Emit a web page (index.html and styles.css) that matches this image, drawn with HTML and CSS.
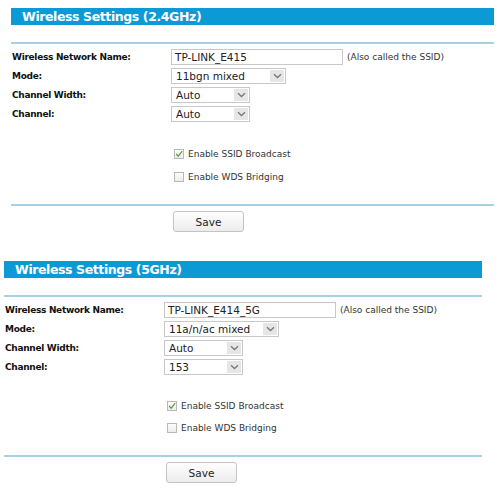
FILE: index.html
```html
<!DOCTYPE html>
<html>
<head>
<meta charset="utf-8">
<link rel="stylesheet" href="styles.css">
</head>
<body>
<section class="panel panel-a">
  <h2 class="title">Wireless Settings (2.4GHz)</h2>
  <div class="rule rule-top"></div>
  <div class="form">
    <div class="label">Wireless Network Name:</div>
    <div class="field"><span class="input w-ssid">TP-LINK_E415</span><span class="note">(Also called the SSID)</span></div>
    <div class="label">Mode:</div>
    <div class="field"><span class="select w-mode"><span class="val">11bgn mixed</span><span class="arrow"><svg width="9" height="6" viewBox="0 0 9 6"><path d="M1 1.2 L4.5 4.5 L8 1.2" fill="none" stroke="#777" stroke-width="1.3"/></svg></span></span></div>
    <div class="label">Channel Width:</div>
    <div class="field"><span class="select w-small"><span class="val">Auto</span><span class="arrow"><svg width="9" height="6" viewBox="0 0 9 6"><path d="M1 1.2 L4.5 4.5 L8 1.2" fill="none" stroke="#777" stroke-width="1.3"/></svg></span></span></div>
    <div class="label">Channel:</div>
    <div class="field"><span class="select w-small"><span class="val">Auto</span><span class="arrow"><svg width="9" height="6" viewBox="0 0 9 6"><path d="M1 1.2 L4.5 4.5 L8 1.2" fill="none" stroke="#777" stroke-width="1.3"/></svg></span></span></div>
  </div>
  <div class="checks">
    <div class="check"><span class="box"><svg width="10" height="10" viewBox="0 0 10 10"><path d="M1.5 5 L4 7.8 L9 1.5" fill="none" stroke="#5f9f3c" stroke-width="1.5"/></svg></span>Enable SSID Broadcast</div>
    <div class="check"><span class="box"></span>Enable WDS Bridging</div>
  </div>
  <div class="rule rule-bottom"></div>
  <div class="actions"><span class="btn">Save</span></div>
</section>

<section class="panel panel-b">
  <h2 class="title">Wireless Settings (5GHz)</h2>
  <div class="rule rule-top"></div>
  <div class="form">
    <div class="label">Wireless Network Name:</div>
    <div class="field"><span class="input w-ssid">TP-LINK_E414_5G</span><span class="note">(Also called the SSID)</span></div>
    <div class="label">Mode:</div>
    <div class="field"><span class="select w-mode"><span class="val">11a/n/ac mixed</span><span class="arrow"><svg width="9" height="6" viewBox="0 0 9 6"><path d="M1 1.2 L4.5 4.5 L8 1.2" fill="none" stroke="#777" stroke-width="1.3"/></svg></span></span></div>
    <div class="label">Channel Width:</div>
    <div class="field"><span class="select w-small"><span class="val">Auto</span><span class="arrow"><svg width="9" height="6" viewBox="0 0 9 6"><path d="M1 1.2 L4.5 4.5 L8 1.2" fill="none" stroke="#777" stroke-width="1.3"/></svg></span></span></div>
    <div class="label">Channel:</div>
    <div class="field"><span class="select w-small"><span class="val">153</span><span class="arrow"><svg width="9" height="6" viewBox="0 0 9 6"><path d="M1 1.2 L4.5 4.5 L8 1.2" fill="none" stroke="#777" stroke-width="1.3"/></svg></span></span></div>
  </div>
  <div class="checks">
    <div class="check"><span class="box"><svg width="10" height="10" viewBox="0 0 10 10"><path d="M1.5 5 L4 7.8 L9 1.5" fill="none" stroke="#5f9f3c" stroke-width="1.5"/></svg></span>Enable SSID Broadcast</div>
    <div class="check"><span class="box"></span>Enable WDS Bridging</div>
  </div>
  <div class="rule rule-bottom"></div>
  <div class="actions"><span class="btn">Save</span></div>
</section>
</body>
</html>
```

FILE: styles.css
```css
html, body {
  margin: 0;
  padding: 0;
  background: #ffffff;
}
body {
  font-family: "DejaVu Sans", Verdana, sans-serif;
  color: #222;
  font-size: 10px;
}
.panel {
  display: flex;
  flex-direction: column;
}
.panel-a {
  margin-left: 11px;
  width: 483px;
  padding-top: 8px;
}
.panel-b {
  margin-left: 4px;
  width: 478px;
  margin-top: 29px;
}
.title {
  margin: 0;
  height: 17px;
  line-height: 17px;
  background: #0c9ad7;
  color: #ffffff;
  font-size: 12.5px;
  font-weight: bold;
  padding-left: 11px;
  letter-spacing: -0.4px;
}
.rule {
  height: 2px;
  background: #a7d0e2;
}
.rule-top {
  margin-top: 17px;
}
.form {
  display: grid;
  grid-template-columns: 160px 1fr;
  row-gap: 3px;
  margin-top: 5px;
  align-items: center;
}
.label {
  font-weight: bold;
  font-size: 9px;
  letter-spacing: -0.3px;
  padding-left: 1px;
  color: #111;
}
.field {
  display: flex;
  align-items: center;
}
.input, .select {
  box-sizing: border-box;
  height: 16px;
  border: 1px solid #c8c8c8;
  background: #fff;
  font-size: 10.5px;
  color: #222;
  display: flex;
  align-items: center;
}
.input {
  padding-left: 3px;
}
.w-ssid { width: 172px; }
.w-mode { width: 115px; }
.w-small { width: 79px; }
.select .val {
  flex: 1;
  padding-left: 4px;
}
.arrow {
  width: 14px;
  height: 12px;
  margin-right: 1px;
  background: #e6e6e6;
  display: flex;
  align-items: center;
  justify-content: center;
}
.note {
  margin-left: 4px;
  font-size: 9px;
  color: #333;
}
.checks {
  display: flex;
  flex-direction: column;
  row-gap: 12px;
  margin-top: 26px;
  padding-left: 163px;
}
.panel-b .checks {
  row-gap: 11px;
  margin-top: 25px;
}
.check {
  display: flex;
  align-items: center;
  font-size: 9px;
  color: #333;
  height: 11px;
}
.box {
  box-sizing: border-box;
  width: 10px;
  height: 10px;
  border: 1px solid #b8b8b8;
  background: linear-gradient(#fdfdfd, #ececec);
  margin-right: 4px;
  display: flex;
  align-items: center;
  justify-content: center;
}
.rule-bottom {
  margin-top: 22px;
}
.actions {
  margin-top: 5px;
  padding-left: 162px;
}
.btn {
  box-sizing: border-box;
  display: flex;
  align-items: center;
  justify-content: center;
  width: 71px;
  height: 21px;
  border: 1px solid #c4c4c4;
  border-radius: 3px;
  background: linear-gradient(#ffffff, #ececec);
  font-size: 10.5px;
  color: #222;
}
```
